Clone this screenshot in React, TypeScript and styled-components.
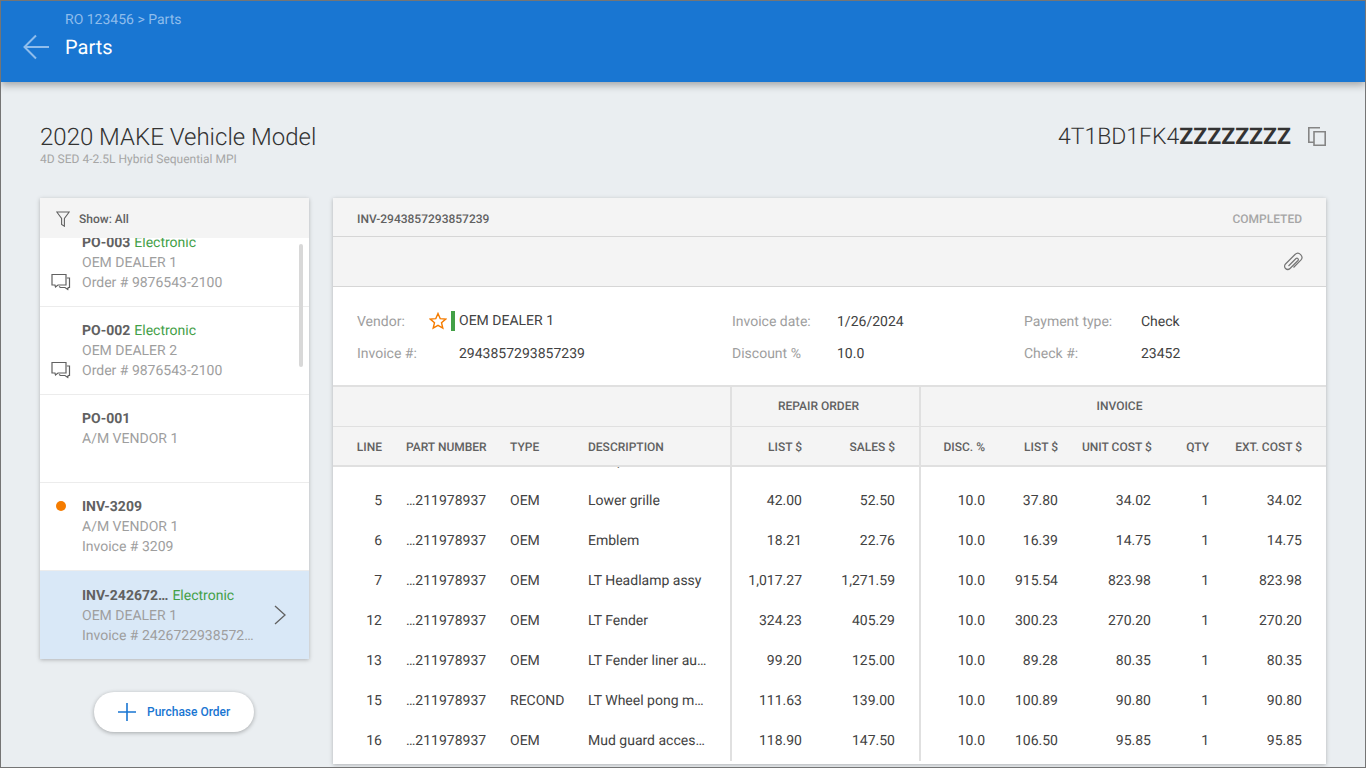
import React from "react";
import styled, { createGlobalStyle } from "styled-components";

const GlobalStyle = createGlobalStyle`
  html, body {
    margin: 0;
    padding: 0;
    height: 100%;
    overflow: hidden;
  }
  body {
    font-family: Roboto, "Liberation Sans", sans-serif;
    font-size: 14px;
    color: #424242;
    text-rendering: geometricPrecision;
  }
  * {
    box-sizing: border-box;
  }
`;

const COLUMNS = "73px 104px 78px 142px 2px 94px 93px 2px 88px 73px 93px 58px 1fr";

const Page = styled.div`
  width: 100%;
  height: 100vh;
  border: 1px solid #757575;
  background: #eaeef1;
  display: flex;
  flex-direction: column;
  overflow: hidden;
`;

const AppBar = styled.header`
  flex: none;
  height: 81px;
  background: #1976d2;
  box-shadow: 0 3px 8px rgba(0, 0, 0, 0.32);
  display: flex;
  align-items: flex-start;
  padding: 10px 0 0 22px;
  gap: 16px;
  position: relative;
  z-index: 2;
`;

const BackButton = styled.button`
  border: 0;
  background: none;
  padding: 0;
  margin-top: 23px;
  width: 26px;
  height: 26px;
  display: flex;
`;

const Crumbs = styled.div`
  display: flex;
  flex-direction: column;
`;

const Crumb = styled.div`
  font-size: 14px;
  line-height: 18px;
  color: #8fbdec;
`;

const BarTitle = styled.div`
  font-size: 20px;
  line-height: 24px;
  margin-top: 6px;
  color: #fff;
`;

const Content = styled.main`
  flex: 1;
  min-height: 0;
  padding: 40px 39px 0;
  display: flex;
  flex-direction: column;
`;

const VehicleRow = styled.div`
  flex: none;
  height: 76px;
  display: flex;
  justify-content: space-between;
  align-items: flex-start;
`;

const VehicleName = styled.h1`
  margin: 0;
  font-size: 24px;
  line-height: 30px;
  font-weight: 300;
  color: #333;
`;

const VehicleSub = styled.div`
  font-size: 12px;
  line-height: 14px;
  color: #a6a6a6;
`;

const Vin = styled.div`
  display: flex;
  align-items: center;
  gap: 17px;
  font-size: 23px;
  line-height: 30px;
  font-weight: 300;
  color: #333;
  b {
    font-weight: 700;
  }
`;

const CopyGlyph = styled.svg`
  margin-top: -2px;
`;

const Columns = styled.div`
  flex: 1;
  min-height: 0;
  display: flex;
  gap: 24px;
  align-items: flex-start;
`;

const Side = styled.aside`
  flex: none;
  width: 269px;
  display: flex;
  flex-direction: column;
`;

const SideCard = styled.div`
  width: 100%;
  background: #fff;
  box-shadow: 0 1px 4px rgba(0, 0, 0, 0.25);
  position: relative;
`;

const FilterBar = styled.div`
  height: 40px;
  background: #f4f4f4;
  display: flex;
  align-items: center;
  gap: 9px;
  padding: 2px 0 0 16px;
  font-size: 12px;
  font-weight: 500;
  color: #616161;
  position: relative;
  z-index: 1;
`;

const ItemList = styled.div`
  height: 421px;
  overflow: hidden;
`;

const ItemScroller = styled.div`
  margin-top: -19px;
`;

const Item = styled.div<{ $active?: boolean }>`
  height: 88px;
  padding: ${(p) => (p.$active ? "15px" : "14px")} 0 0 42px;
  border-bottom: 1px solid ${(p) => (p.$active ? "transparent" : "#ececec")};
  background: ${(p) => (p.$active ? "#d9e8f7" : "#fff")};
  position: relative;
  line-height: 20px;
  color: #9e9e9e;
`;

const ItemTitle = styled.div`
  display: flex;
  gap: 4px;
  color: #616161;
  font-weight: 700;
`;

const Electronic = styled.span`
  color: #43a047;
  font-weight: 400;
`;

const ItemLine = styled.div`
  white-space: nowrap;
`;

const ItemMark = styled.div`
  position: absolute;
  left: 11px;
  bottom: 15px;
  display: flex;
`;

const OrangeDot = styled.span`
  position: absolute;
  left: 16px;
  top: 18px;
  width: 10px;
  height: 10px;
  border-radius: 50%;
  background: #f57c00;
`;

const ItemChevron = styled.div`
  position: absolute;
  right: 23px;
  top: 34px;
  display: flex;
`;

const ScrollThumb = styled.div`
  position: absolute;
  right: 6px;
  top: 46px;
  width: 4px;
  height: 123px;
  border-radius: 2px;
  background: #d8d8d8;
  z-index: 1;
`;

const AddButton = styled.button`
  margin: 33px 0 0 54px;
  width: 160px;
  height: 40px;
  border: 0;
  border-radius: 20px;
  background: #fff;
  box-shadow: 0 1px 4px rgba(0, 0, 0, 0.3);
  display: flex;
  align-items: center;
  padding: 0 0 0 24px;
  gap: 11px;
  font-family: inherit;
  font-size: 12px;
  font-weight: 500;
  color: #1976d2;
`;

const Panel = styled.section`
  flex: 1;
  min-width: 0;
  height: 566px;
  background: #fff;
  box-shadow: 0 1px 4px rgba(0, 0, 0, 0.25);
  display: flex;
  flex-direction: column;
`;

const PanelHead = styled.div`
  flex: none;
  height: 39px;
  background: #f4f4f4;
  border-bottom: 1px solid #d6d6d6;
  display: flex;
  justify-content: space-between;
  align-items: center;
  padding: 3px 24px 0;
  font-size: 12px;
  font-weight: 500;
  color: #616161;
`;

const Status = styled.span`
  color: #a6a6a6;
`;

const Toolbar = styled.div`
  flex: none;
  height: 50px;
  background: #f4f4f4;
  border-bottom: 1px solid #d6d6d6;
  display: flex;
  justify-content: flex-end;
  align-items: center;
  padding-right: 23px;
`;

const Info = styled.div`
  flex: none;
  height: 98px;
  display: grid;
  grid-template-columns: 102px 273px 105px 187px 117px 1fr;
  grid-auto-rows: 32px;
  align-content: start;
  padding: 19px 0 0 24px;
  align-items: center;
`;

const InfoLabel = styled.div`
  color: #9e9e9e;
`;

const InfoValue = styled.div`
  display: flex;
  align-items: center;
  color: #424242;
`;

const VendorValue = styled(InfoValue)`
  margin-top: -2px;
`;

const VendorMarks = styled.span`
  display: flex;
  align-items: center;
  margin-left: -30px;
  margin-right: 4px;
  gap: 4px;
`;

const GreenBar = styled.span`
  width: 4px;
  height: 20px;
  background: #43a047;
`;

const TableHead = styled.div`
  flex: none;
  background: #f4f4f4;
  border-top: 2px solid #e0e0e0;
  border-bottom: 2px solid #e0e0e0;
`;

const GroupRow = styled.div`
  display: grid;
  grid-template-columns: ${COLUMNS};
  height: 40px;
  border-bottom: 1px solid #e0e0e0;
  font-size: 12px;
  font-weight: 500;
  color: #616161;
  align-items: center;
`;

const ColumnRow = styled(GroupRow)`
  height: 38px;
  border-bottom: 0;
  padding-top: 2px;
`;

const Divider = styled.div`
  align-self: stretch;
  background: #e0e0e0;
`;

const ColumnRowDivider = styled(Divider)`
  margin-top: -2px;
`;

const GroupTitle = styled.div<{ $span: number; $inset?: number }>`
  grid-column: span ${(p) => p.$span};
  text-align: center;
  padding-right: ${(p) => p.$inset ?? 0}px;
  margin-top: -2px;
`;

const HeadCell = styled.div<{ $right?: boolean }>`
  text-align: ${(p) => (p.$right ? "right" : "left")};
  padding-right: ${(p) => (p.$right ? "24px" : "0")};
  white-space: nowrap;
`;

const TableBody = styled.div`
  flex: 1;
  min-height: 0;
  margin-bottom: 3px;
  overflow: hidden;
`;

const BodyScroller = styled.div`
  margin-top: -26px;
`;

const Row = styled.div`
  display: grid;
  grid-template-columns: ${COLUMNS};
  height: 40px;
  align-items: center;
`;

const Cell = styled.div<{ $right?: boolean }>`
  text-align: ${(p) => (p.$right ? "right" : "left")};
  padding-right: ${(p) => (p.$right ? "24px" : "0")};
  white-space: nowrap;
`;

const DescCell = styled(Cell)`
  padding-right: 21px;
  overflow: hidden;
  text-overflow: ellipsis;
`;

const BackIcon = () => (
  <svg width="26" height="26" viewBox="0 0 26 26" fill="none" stroke="#8fbdec" strokeWidth="2">
    <path d="M26 13H2M13 1.5L1.5 13 13 24.5" />
  </svg>
);

const FilterIcon = () => (
  <svg width="14" height="16" viewBox="0 0 14 16" fill="none" stroke="#616161" strokeWidth="1.1">
    <path d="M.8 1h12.4L8.4 7.5v7.7L5.6 13.4V7.5z" />
  </svg>
);

const ChatIcon = () => (
  <svg width="20" height="18" viewBox="0 0 20 18" fill="none" stroke="#616161" strokeWidth="1.2">
    <path d="M1 1.5h14v10.5H7l-2.5 2L4 12H1z" />
    <path d="M15.8 5h2.7v9.5h-1.3l-.4 2-2.8-2H9.5l-1.5-1" />
  </svg>
);

const StarIcon = () => (
  <svg width="18" height="18" viewBox="0 0 18 18" fill="none" stroke="#f57c00" strokeWidth="1.4">
    <path d="M9 1.5l2.2 5.1 5.5.5-4.2 3.6 1.3 5.4L9 13.3l-4.8 2.8 1.3-5.4-4.2-3.6 5.5-.5z" />
  </svg>
);

const ChevronIcon = () => (
  <svg width="12" height="20" viewBox="0 0 12 20" fill="none" stroke="#616161" strokeWidth="1.3">
    <path d="M1 1l10 9-10 9" />
  </svg>
);

const PlusIcon = () => (
  <svg width="18" height="18" viewBox="0 0 18 18" fill="none" stroke="#1976d2" strokeWidth="1.6">
    <path d="M0 9h18M9 0v18" />
  </svg>
);

const CopyIcon = () => (
  <CopyGlyph width="18" height="19" viewBox="0 0 18 19" fill="none" stroke="#858585" strokeWidth="1.6">
    <path d="M6 4.8h11.2v13.4H6z" />
    <path d="M12 .8H.8v14.4H6" />
  </CopyGlyph>
);

const ClipIcon = () => (
  <svg width="20" height="20" viewBox="0 0 20 20" fill="none" stroke="#757575" strokeWidth="1.2">
    <path d="M5.5 14L13 6.5A1.42 1.42 0 0 1 15 8.5L7 16.5A3.18 3.18 0 0 1 2.5 12L12 2.5A4.07 4.07 0 0 1 17.8 8.2L10.5 15.5" />
  </svg>
);

type SideItem = {
  title: string;
  electronic?: boolean;
  lines: string[];
  chat?: boolean;
  dot?: boolean;
  active?: boolean;
};

const items: SideItem[] = [
  { title: "PO-003", electronic: true, lines: ["OEM DEALER 1", "Order # 9876543-2100"], chat: true },
  { title: "PO-002", electronic: true, lines: ["OEM DEALER 2", "Order # 9876543-2100"], chat: true },
  { title: "PO-001", lines: ["A/M VENDOR 1"] },
  { title: "INV-3209", lines: ["A/M VENDOR 1", "Invoice # 3209"], dot: true },
  {
    title: "INV-242672…",
    electronic: true,
    lines: ["OEM DEALER 1", "Invoice # 2426722938572…"],
    active: true,
  },
];

const rows = [
  ["4", "OEM", "Bumper cover", "212.00", "265.00", "10.0", "190.80", "171.72", "1", "171.72"],
  ["5", "OEM", "Lower grille", "42.00", "52.50", "10.0", "37.80", "34.02", "1", "34.02"],
  ["6", "OEM", "Emblem", "18.21", "22.76", "10.0", "16.39", "14.75", "1", "14.75"],
  ["7", "OEM", "LT Headlamp assy", "1,017.27", "1,271.59", "10.0", "915.54", "823.98", "1", "823.98"],
  ["12", "OEM", "LT Fender", "324.23", "405.29", "10.0", "300.23", "270.20", "1", "270.20"],
  ["13", "OEM", "LT Fender liner automotive", "99.20", "125.00", "10.0", "89.28", "80.35", "1", "80.35"],
  ["15", "RECOND", "LT Wheel pong mount", "111.63", "139.00", "10.0", "100.89", "90.80", "1", "90.80"],
  ["16", "OEM", "Mud guard accessory", "118.90", "147.50", "10.0", "106.50", "95.85", "1", "95.85"],
];

export default function App() {
  return (
    <Page>
      <GlobalStyle />
      <AppBar>
        <BackButton>
          <BackIcon />
        </BackButton>
        <Crumbs>
          <Crumb>RO 123456 &gt; Parts</Crumb>
          <BarTitle>Parts</BarTitle>
        </Crumbs>
      </AppBar>
      <Content>
        <VehicleRow>
          <div>
            <VehicleName>2020 MAKE Vehicle Model</VehicleName>
            <VehicleSub>4D SED 4-2.5L Hybrid Sequential MPI</VehicleSub>
          </div>
          <Vin>
            <span>
              4T1BD1FK4<b>ZZZZZZZZ</b>
            </span>
            <CopyIcon />
          </Vin>
        </VehicleRow>
        <Columns>
          <Side>
            <SideCard>
              <FilterBar>
                <FilterIcon />
                Show: All
              </FilterBar>
              <ScrollThumb />
              <ItemList>
                <ItemScroller>
                  {items.map((item) => (
                    <Item key={item.title} $active={item.active}>
                      {item.dot && <OrangeDot />}
                      {item.chat && (
                        <ItemMark>
                          <ChatIcon />
                        </ItemMark>
                      )}
                      <ItemTitle>
                        {item.title}
                        {item.electronic && <Electronic>Electronic</Electronic>}
                      </ItemTitle>
                      {item.lines.map((line) => (
                        <ItemLine key={line}>{line}</ItemLine>
                      ))}
                      {item.active && (
                        <ItemChevron>
                          <ChevronIcon />
                        </ItemChevron>
                      )}
                    </Item>
                  ))}
                </ItemScroller>
              </ItemList>
            </SideCard>
            <AddButton>
              <PlusIcon />
              Purchase Order
            </AddButton>
          </Side>
          <Panel>
            <PanelHead>
              INV-2943857293857239
              <Status>COMPLETED</Status>
            </PanelHead>
            <Toolbar>
              <ClipIcon />
            </Toolbar>
            <Info>
              <InfoLabel>Vendor:</InfoLabel>
              <VendorValue>
                <VendorMarks>
                  <StarIcon />
                  <GreenBar />
                </VendorMarks>
                OEM DEALER 1
              </VendorValue>
              <InfoLabel>Invoice date:</InfoLabel>
              <InfoValue>1/26/2024</InfoValue>
              <InfoLabel>Payment type:</InfoLabel>
              <InfoValue>Check</InfoValue>
              <InfoLabel>Invoice #:</InfoLabel>
              <InfoValue>2943857293857239</InfoValue>
              <InfoLabel>Discount %</InfoLabel>
              <InfoValue>10.0</InfoValue>
              <InfoLabel>Check #:</InfoLabel>
              <InfoValue>23452</InfoValue>
            </Info>
            <TableHead>
              <GroupRow>
                <GroupTitle $span={4} />
                <Divider />
                <GroupTitle $span={2} $inset={14}>
                  REPAIR ORDER
                </GroupTitle>
                <Divider />
                <GroupTitle $span={5} $inset={8}>
                  INVOICE
                </GroupTitle>
              </GroupRow>
              <ColumnRow>
                <HeadCell $right>LINE</HeadCell>
                <HeadCell>PART NUMBER</HeadCell>
                <HeadCell>TYPE</HeadCell>
                <HeadCell>DESCRIPTION</HeadCell>
                <ColumnRowDivider />
                <HeadCell $right>LIST $</HeadCell>
                <HeadCell $right>SALES $</HeadCell>
                <ColumnRowDivider />
                <HeadCell $right>DISC. %</HeadCell>
                <HeadCell $right>LIST $</HeadCell>
                <HeadCell $right>UNIT COST $</HeadCell>
                <HeadCell $right>QTY</HeadCell>
                <HeadCell $right>EXT. COST $</HeadCell>
              </ColumnRow>
            </TableHead>
            <TableBody>
              <BodyScroller>
                {rows.map((r) => (
                  <Row key={r[0]}>
                    <Cell $right>{r[0]}</Cell>
                    <Cell>…211978937</Cell>
                    <Cell>{r[1]}</Cell>
                    <DescCell>{r[2]}</DescCell>
                    <Divider />
                    <Cell $right>{r[3]}</Cell>
                    <Cell $right>{r[4]}</Cell>
                    <Divider />
                    <Cell $right>{r[5]}</Cell>
                    <Cell $right>{r[6]}</Cell>
                    <Cell $right>{r[7]}</Cell>
                    <Cell $right>{r[8]}</Cell>
                    <Cell $right>{r[9]}</Cell>
                  </Row>
                ))}
              </BodyScroller>
            </TableBody>
          </Panel>
        </Columns>
      </Content>
    </Page>
  );
}
